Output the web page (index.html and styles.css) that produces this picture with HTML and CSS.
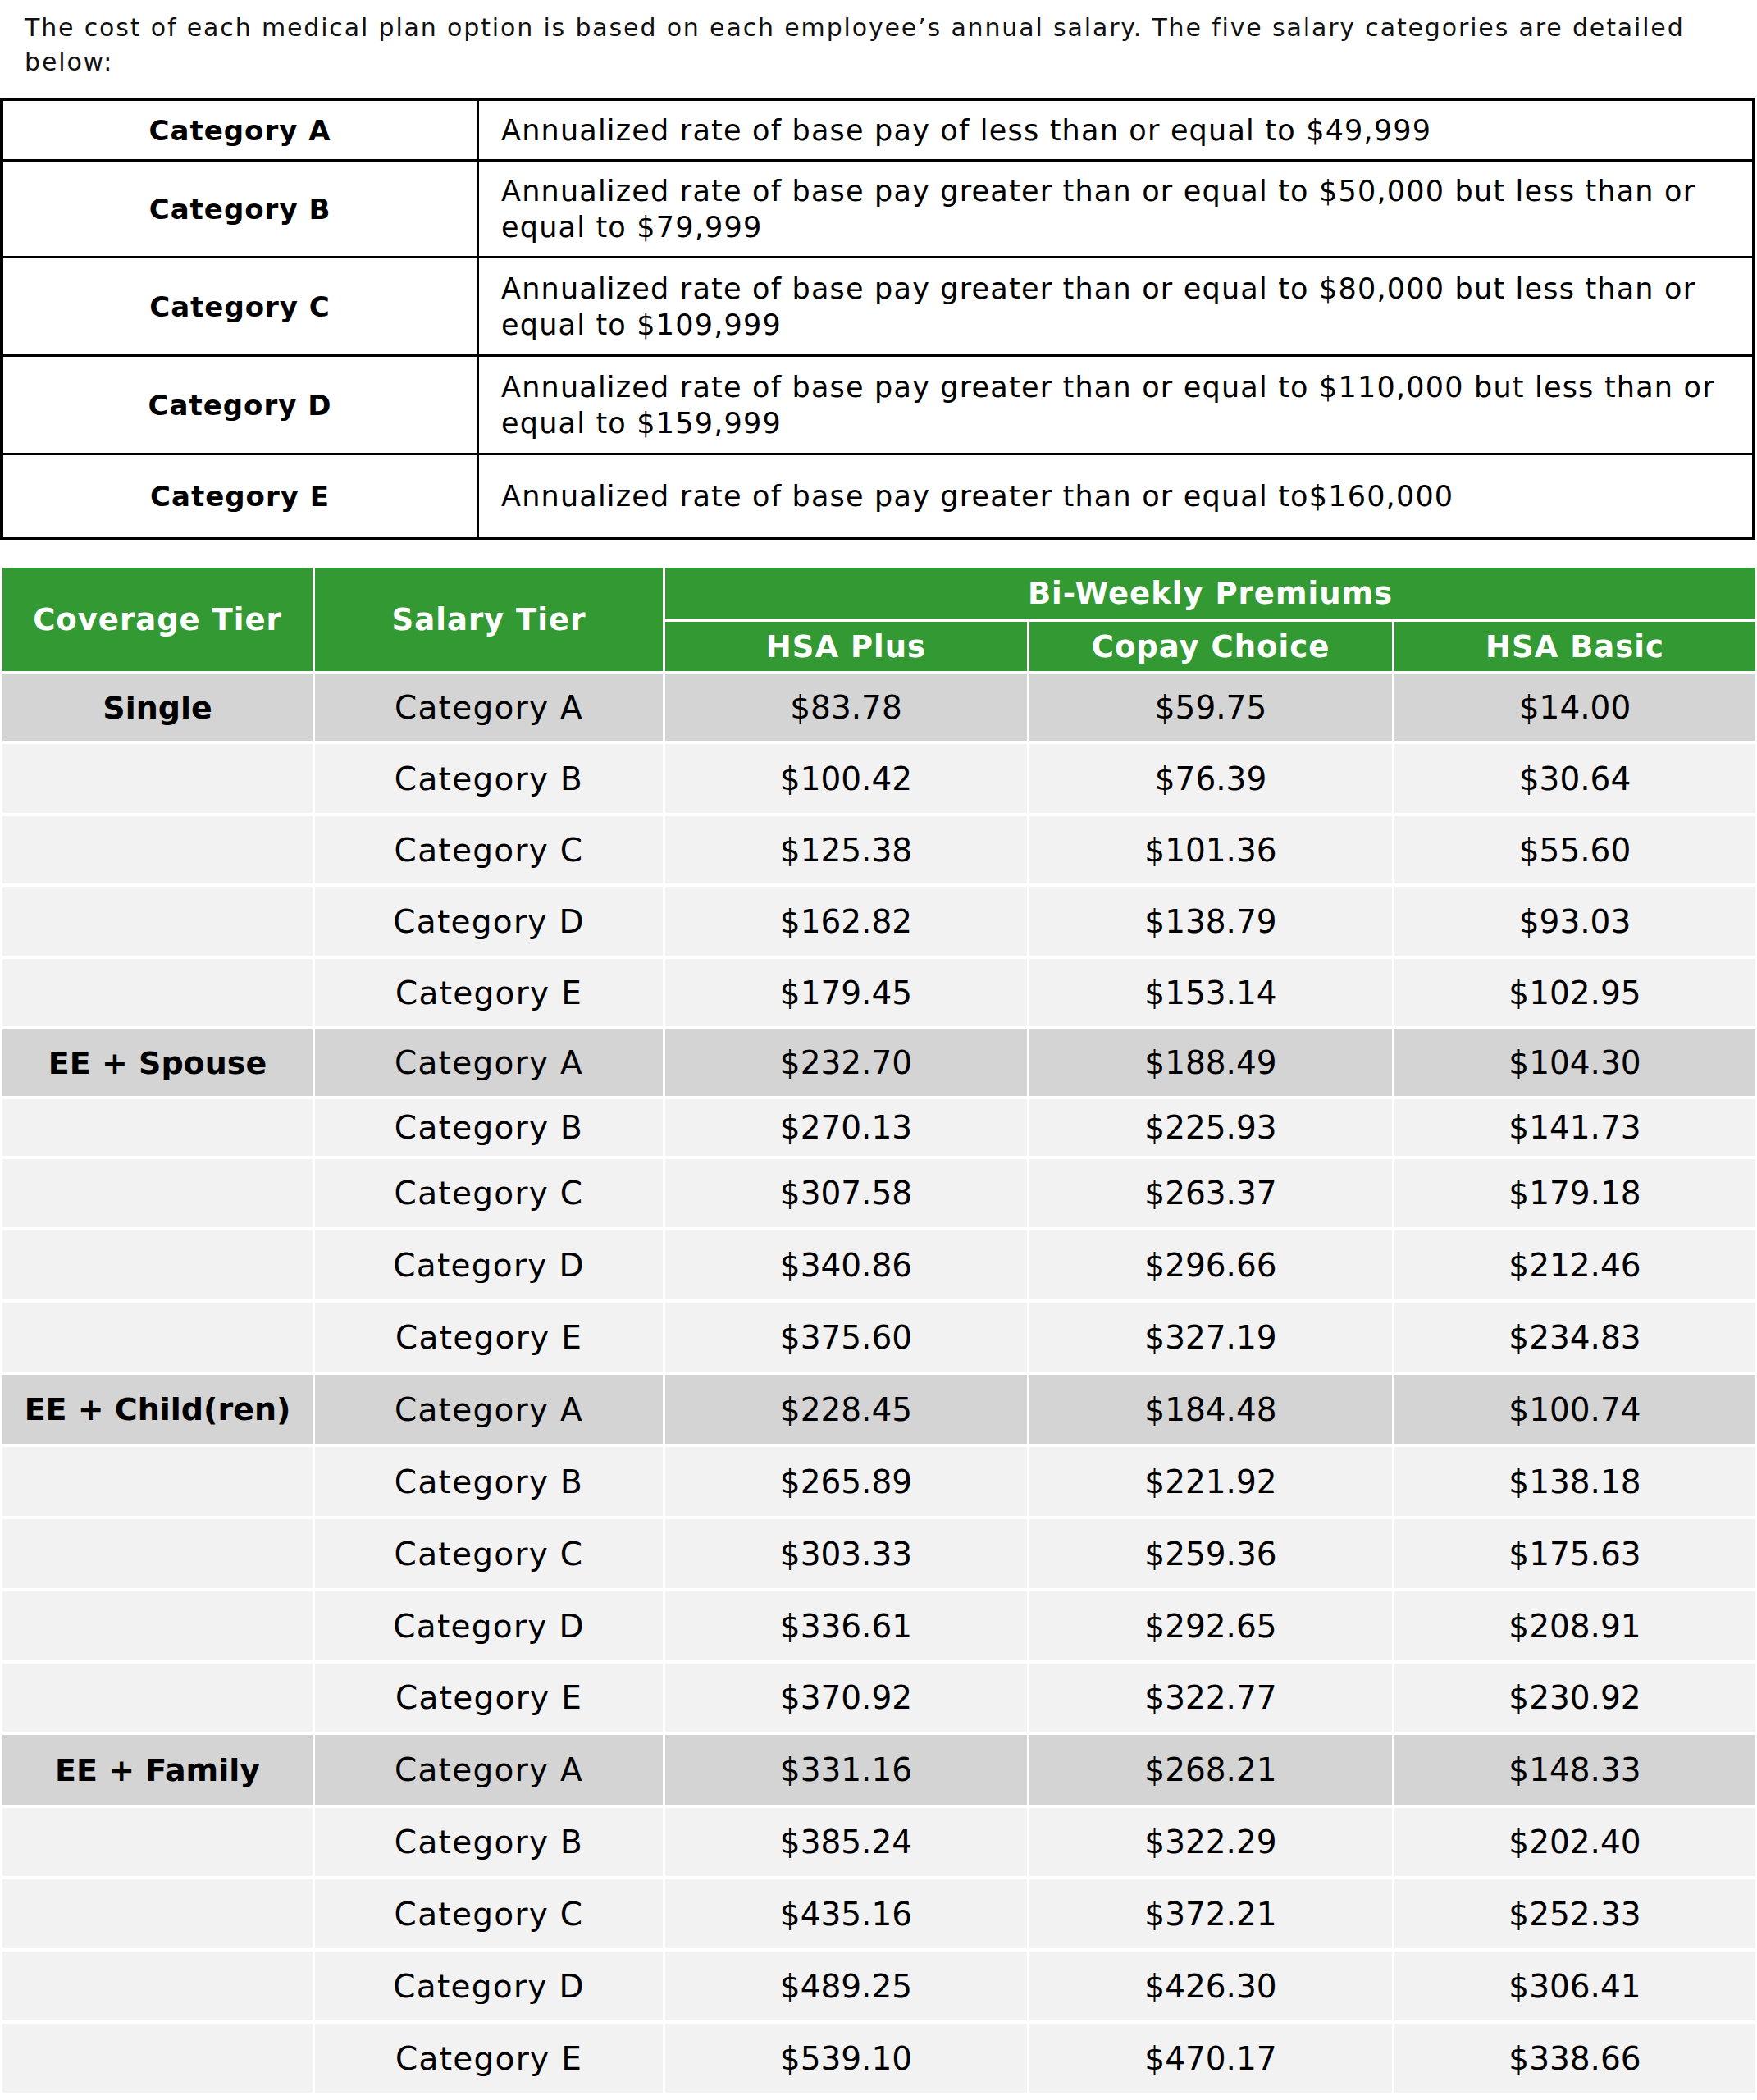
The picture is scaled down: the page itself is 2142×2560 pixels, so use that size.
FILE: index.html
```html
<!DOCTYPE html>
<html lang="en">
<head>
<meta charset="utf-8">
<title>Medical Plan Premiums</title>
<link rel="stylesheet" href="styles.css">
</head>
<body>
<p class="intro">The cost of each medical plan option is based on each employee’s annual salary. The five salary categories are detailed below:</p>

<div class="cats">
  <div class="cat-name">Category A</div>
  <div class="cat-desc">Annualized rate of base pay of less than or equal to $49,999</div>
  <div class="cat-name">Category B</div>
  <div class="cat-desc">Annualized rate of base pay greater than or equal to $50,000 but less than or equal to $79,999</div>
  <div class="cat-name">Category C</div>
  <div class="cat-desc">Annualized rate of base pay greater than or equal to $80,000 but less than or equal to $109,999</div>
  <div class="cat-name">Category D</div>
  <div class="cat-desc">Annualized rate of base pay greater than or equal to $110,000 but less than or equal to $159,999</div>
  <div class="cat-name">Category E</div>
  <div class="cat-desc">Annualized rate of base pay greater than or equal to$160,000</div>
</div>

<div class="rates">
  <div class="hd span-rows">Coverage Tier</div>
  <div class="hd span-rows">Salary Tier</div>
  <div class="hd span-cols">Bi-Weekly Premiums</div>
  <div class="hd">HSA Plus</div>
  <div class="hd">Copay Choice</div>
  <div class="hd">HSA Basic</div>

  <div class="c dk grp">Single</div><div class="c dk">Category A</div><div class="c dk">$83.78</div><div class="c dk">$59.75</div><div class="c dk">$14.00</div>
  <div class="c"></div><div class="c">Category B</div><div class="c">$100.42</div><div class="c">$76.39</div><div class="c">$30.64</div>
  <div class="c"></div><div class="c">Category C</div><div class="c">$125.38</div><div class="c">$101.36</div><div class="c">$55.60</div>
  <div class="c"></div><div class="c">Category D</div><div class="c">$162.82</div><div class="c">$138.79</div><div class="c">$93.03</div>
  <div class="c"></div><div class="c">Category E</div><div class="c">$179.45</div><div class="c">$153.14</div><div class="c">$102.95</div>

  <div class="c dk grp">EE + Spouse</div><div class="c dk">Category A</div><div class="c dk">$232.70</div><div class="c dk">$188.49</div><div class="c dk">$104.30</div>
  <div class="c"></div><div class="c">Category B</div><div class="c">$270.13</div><div class="c">$225.93</div><div class="c">$141.73</div>
  <div class="c"></div><div class="c">Category C</div><div class="c">$307.58</div><div class="c">$263.37</div><div class="c">$179.18</div>
  <div class="c"></div><div class="c">Category D</div><div class="c">$340.86</div><div class="c">$296.66</div><div class="c">$212.46</div>
  <div class="c"></div><div class="c">Category E</div><div class="c">$375.60</div><div class="c">$327.19</div><div class="c">$234.83</div>

  <div class="c dk grp">EE + Child(ren)</div><div class="c dk">Category A</div><div class="c dk">$228.45</div><div class="c dk">$184.48</div><div class="c dk">$100.74</div>
  <div class="c"></div><div class="c">Category B</div><div class="c">$265.89</div><div class="c">$221.92</div><div class="c">$138.18</div>
  <div class="c"></div><div class="c">Category C</div><div class="c">$303.33</div><div class="c">$259.36</div><div class="c">$175.63</div>
  <div class="c"></div><div class="c">Category D</div><div class="c">$336.61</div><div class="c">$292.65</div><div class="c">$208.91</div>
  <div class="c"></div><div class="c">Category E</div><div class="c">$370.92</div><div class="c">$322.77</div><div class="c">$230.92</div>

  <div class="c dk grp">EE + Family</div><div class="c dk">Category A</div><div class="c dk">$331.16</div><div class="c dk">$268.21</div><div class="c dk">$148.33</div>
  <div class="c"></div><div class="c">Category B</div><div class="c">$385.24</div><div class="c">$322.29</div><div class="c">$202.40</div>
  <div class="c"></div><div class="c">Category C</div><div class="c">$435.16</div><div class="c">$372.21</div><div class="c">$252.33</div>
  <div class="c"></div><div class="c">Category D</div><div class="c">$489.25</div><div class="c">$426.30</div><div class="c">$306.41</div>
  <div class="c"></div><div class="c">Category E</div><div class="c">$539.10</div><div class="c">$470.17</div><div class="c">$338.66</div>
</div>
</body>
</html>
```

FILE: styles.css
```css
html, body {
  margin: 0;
  padding: 0;
  background: #ffffff;
}

body {
  font-family: "DejaVu Sans", Inter, sans-serif;
  color: #000000;
  width: 2142px;
}

.intro {
  margin: 0;
  padding: 13px 30px 0 30px;
  font-size: 30px;
  line-height: 42px;
  letter-spacing: 1.85px;
  color: #111111;
}

.cats {
  margin-top: 22px;
  width: 2140px;
  box-sizing: border-box;
  display: grid;
  grid-template-columns: 577px 1fr;
  grid-template-rows: 71px 115px 117px 117px 100px;
  gap: 3px;
  padding: 4px 4px 3px 4px;
  background: #000000;
}

.cat-name,
.cat-desc {
  background: #ffffff;
  display: flex;
  align-items: center;
}

.cat-name {
  justify-content: center;
  font-weight: 700;
  font-size: 34px;
  line-height: 44px;
  letter-spacing: 1px;
}

.cat-desc {
  padding: 0 8px 0 27px;
  font-size: 35px;
  line-height: 44px;
  letter-spacing: 1.2px;
}

.rates {
  margin: 34px 0 0 3px;
  width: 2137px;
  display: grid;
  grid-template-columns: 378px 424px 441px 442px 1fr;
  grid-template-rows:
    62px 60px
    81px 84px 82px 84px 82px
    81px 69px 83px 84px 84px
    84px 84px 84px 84px 83px
    85px 83px 84px 84px 84px;
  column-gap: 3px;
  row-gap: 4px;
}

.hd {
  background: #339933;
  color: #ffffff;
  font-weight: 700;
  font-size: 37px;
  letter-spacing: 1px;
  display: flex;
  align-items: center;
  justify-content: center;
}

.span-rows {
  grid-row: span 2;
}

.span-cols {
  grid-column: span 3;
}

.c {
  background: #f2f2f2;
  display: flex;
  align-items: center;
  justify-content: center;
  font-size: 39px;
}

.c:nth-child(5n+3) {
  letter-spacing: 1.3px;
}

.c.dk {
  background: #d4d4d4;
}

.grp {
  font-weight: 700;
  font-size: 38px;
}
```
